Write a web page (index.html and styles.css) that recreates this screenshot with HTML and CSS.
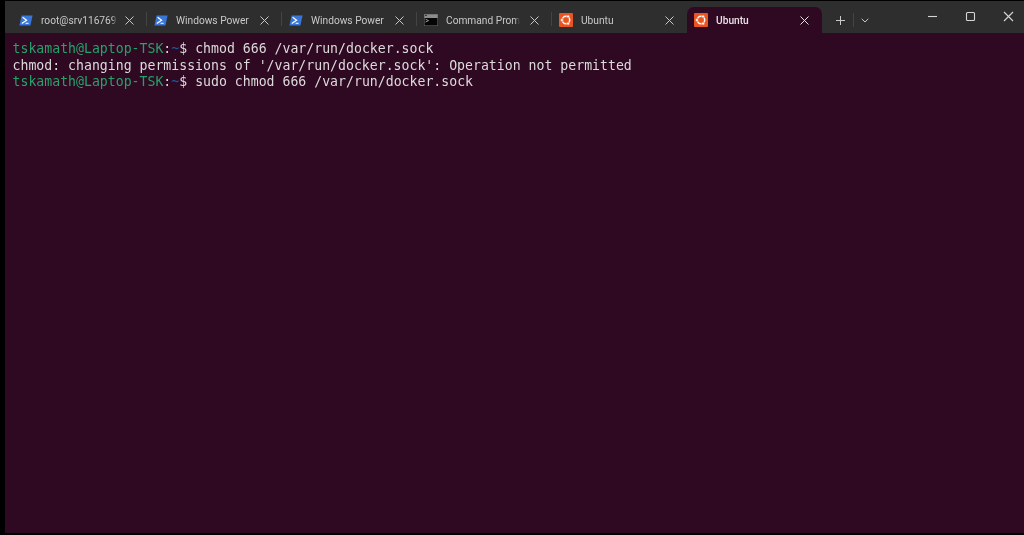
FILE: index.html
```html
<!DOCTYPE html>
<html lang="en">
<head>
<meta charset="utf-8">
<title>Ubuntu</title>
<link rel="stylesheet" href="styles.css">
</head>
<body>
<svg class="defs" width="0" height="0" aria-hidden="true">
  <defs>
    <symbol id="ps" viewBox="0 0 14 11">
      <path d="M2.6 0.5H13.6L11.4 10.5H0.4Z" fill="#3a76d8"/>
      <path d="M3.6 2.2L7.6 5.2L2.8 8.4" fill="none" stroke="#fff" stroke-width="1.2"/>
      <path d="M6.6 8.3H9.6" stroke="#fff" stroke-width="1"/>
    </symbol>
    <symbol id="ub" viewBox="0 0 14 14">
      <rect width="14" height="14" rx="1" fill="#e95420"/>
      <circle cx="7" cy="7" r="3.7" fill="none" stroke="#fff" stroke-width="1.5"/>
      <circle cx="2.9" cy="7" r="1.5" fill="#fff" stroke="#e95420" stroke-width=".6"/>
      <circle cx="9.1" cy="3.4" r="1.5" fill="#fff" stroke="#e95420" stroke-width=".6"/>
      <circle cx="9.1" cy="10.6" r="1.5" fill="#fff" stroke="#e95420" stroke-width=".6"/>
    </symbol>
    <symbol id="cmd" viewBox="0 0 14 12">
      <rect width="14" height="12" fill="#050505"/>
      <rect width="14" height="4" fill="#8c8c8c"/>
      <path d="M1 1.4H3" stroke="#333" stroke-width="1"/>
      <path d="M1.5 5.2L4.5 6.6L1.5 8" fill="none" stroke="#bbb" stroke-width=".8"/>
      <rect x="0.3" y="0.3" width="13.4" height="11.4" fill="none" stroke="#666" stroke-width=".6"/>
    </symbol>
    <symbol id="x" viewBox="0 0 9 9">
      <path d="M.5.5L8.5 8.5M8.5.5L.5 8.5" fill="none" stroke="currentColor" stroke-width="1"/>
    </symbol>
  </defs>
</svg>
<div class="window">
  <header class="titlebar">
    <div class="tabs">
      <div class="tab"><svg class="icon ps"><use href="#ps"/></svg><span class="label fade">root@srv116769</span><svg class="close"><use href="#x"/></svg></div>
      <div class="tab"><svg class="icon ps"><use href="#ps"/></svg><span class="label">Windows Power</span><svg class="close"><use href="#x"/></svg></div>
      <div class="tab"><svg class="icon ps"><use href="#ps"/></svg><span class="label">Windows Power</span><svg class="close"><use href="#x"/></svg></div>
      <div class="tab"><svg class="icon cmd"><use href="#cmd"/></svg><span class="label fade">Command Prom</span><svg class="close"><use href="#x"/></svg></div>
      <div class="tab before-active"><svg class="icon ub"><use href="#ub"/></svg><span class="label">Ubuntu</span><svg class="close"><use href="#x"/></svg></div>
      <div class="tab active"><svg class="icon ub"><use href="#ub"/></svg><span class="label">Ubuntu</span><svg class="close"><use href="#x"/></svg></div>
    </div>
    <div class="tab-actions">
      <svg class="plus" viewBox="0 0 9 9"><path d="M4.5 0V9M0 4.5H9" fill="none" stroke="currentColor" stroke-width="1"/></svg>
      <span class="action-sep"></span>
      <svg class="chev" viewBox="0 0 8 5"><path d="M.7.8L4 4L7.3.8" fill="none" stroke="currentColor" stroke-width="1"/></svg>
    </div>
    <div class="controls">
      <svg class="ctl" viewBox="0 0 11 11"><path d="M1 5.5H10" fill="none" stroke="currentColor" stroke-width="1.1"/></svg>
      <svg class="ctl" viewBox="0 0 11 11"><rect x="1.5" y="1.5" width="8" height="8" rx="1" fill="none" stroke="currentColor" stroke-width="1.1"/></svg>
      <svg class="ctl" viewBox="0 0 11 11"><path d="M1 1L10 10M10 1L1 10" fill="none" stroke="currentColor" stroke-width="1.1"/></svg>
    </div>
  </header>
  <main class="terminal">
    <div class="line"><span class="user">tskamath@Laptop-TSK</span>:<span class="path">~</span>$ chmod 666 /var/run/docker.sock</div>
    <div class="line">chmod: changing permissions of '/var/run/docker.sock': Operation not permitted</div>
    <div class="line"><span class="user">tskamath@Laptop-TSK</span>:<span class="path">~</span>$ sudo chmod 666 /var/run/docker.sock</div>
  </main>
</div>
</body>
</html>
```
FILE: styles.css
```css
* { box-sizing: border-box; }
html, body { height: 100%; }
body {
  margin: 0;
  background: #000;
  overflow: hidden;
  padding: 1px 0 2px 5px;
}
.defs { position: absolute; }
.window {
  height: 100%;
  display: flex;
  flex-direction: column;
}
.titlebar {
  height: 32px;
  flex: none;
  display: flex;
  background: #2e2e2e;
  color: #c9c9c9;
  padding-left: 7px;
}
.tabs { display: flex; padding-top: 6px; }
.tab {
  width: 135px;
  height: 26px;
  display: flex;
  align-items: center;
  padding: 0 13.5px 0 7px;
  position: relative;
  font: 10.2px Roboto, "Open Sans", sans-serif;
}
.tab::after {
  content: "";
  position: absolute;
  right: 0;
  top: 5px;
  height: 14px;
  border-right: 1px solid #444;
}
.before-active::after, .active::after { display: none; }
.active {
  background: #2f0822;
  border-radius: 7px 7px 0 0;
  color: #e6e2e5;
  font-weight: 500;
}
.icon { width: 14px; height: 14px; flex: none; }
.ps { height: 11px; }
.cmd { height: 12px; }
.label {
  margin: 0 auto 0 8px;
  white-space: nowrap;
  filter: blur(.25px);
}
.fade {
  -webkit-mask-image: linear-gradient(to right, #000 93%, transparent);
  mask-image: linear-gradient(to right, #000 93%, transparent);
}
.close { width: 9px; height: 9px; flex: none; }
.tab-actions {
  display: flex;
  align-items: center;
  padding: 6px 0 0 13.5px;
}
.plus { width: 9px; height: 9px; }
.action-sep { height: 14px; border-right: 1px solid #444; margin: 0 7px 0 8.5px; }
.chev { width: 8px; height: 5px; }
.controls {
  margin-left: auto;
  display: flex;
  gap: 27px;
  padding: 9.5px 10px 0 0;
  color: #d6d6d6;
}
.ctl { width: 11px; height: 11px; }
.terminal {
  flex: 1;
  background: #2f0822;
  color: #dcdadb;
  padding: 8px 0 0 7.5px;
  font: 13.2px/16.5px "DejaVu Sans Mono", monospace;
  filter: blur(.3px);
}
.line { white-space: pre; }
.user { color: #26a269; }
.path { color: #1c5aa0; }
```
